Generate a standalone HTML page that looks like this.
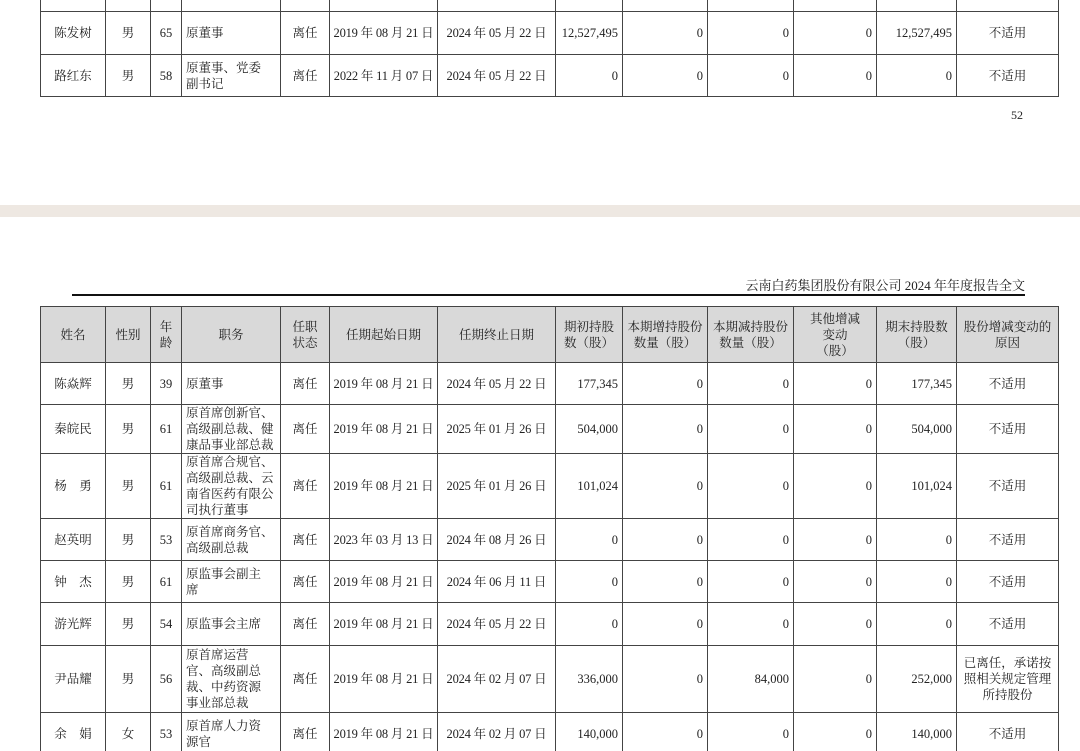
<!DOCTYPE html>
<html><head><meta charset="utf-8"><style>
html,body{margin:0;padding:0;background:#fff;width:1080px;height:751px;overflow:hidden;position:relative}
body{font-family:"Liberation Serif","Noto Serif CJK SC",serif;font-size:12.5px;color:#222}
table{position:absolute;left:40px;border-collapse:collapse;table-layout:fixed;width:1018px}
td{border:1px solid #444;padding:0 4px;line-height:16px;text-align:center;overflow:hidden}
td.l{text-align:left;white-space:nowrap}
td.r{text-align:right}
td.d{white-space:nowrap;padding:0 2px;letter-spacing:-0.2px}
tr.h td{background:#d9d9d9}
.band{position:absolute;left:0;top:205px;width:1080px;height:12px;background:#eee8e2}
.pn{position:absolute;left:1011px;top:108px;font-size:12px}
.title{position:absolute;right:55px;top:275px;font-size:13px}
.hr{position:absolute;left:72px;top:294px;width:953px;height:2px;background:#111}
</style></head><body>
<table style="top:-32px">
<colgroup><col style="width:65px"><col style="width:45px"><col style="width:31px"><col style="width:99px"><col style="width:49px"><col style="width:108px"><col style="width:118px"><col style="width:67px"><col style="width:85px"><col style="width:86px"><col style="width:83px"><col style="width:80px"><col style="width:102px"></colgroup>
<tr style="height:43px"><td></td><td></td><td></td><td></td><td></td><td></td><td></td><td></td><td></td><td></td><td></td><td></td><td></td></tr>
<tr style="height:43px"><td>陈发树</td><td>男</td><td>65</td><td class="l">原董事</td><td>离任</td><td class="d">2019 年 08 月 21 日</td><td class="d">2024 年 05 月 22 日</td><td class="r">12,527,495</td><td class="r">0</td><td class="r">0</td><td class="r">0</td><td class="r">12,527,495</td><td>不适用</td></tr>
<tr style="height:42px"><td>路红东</td><td>男</td><td>58</td><td class="l">原董事、党委<br>副书记</td><td>离任</td><td class="d">2022 年 11 月 07 日</td><td class="d">2024 年 05 月 22 日</td><td class="r">0</td><td class="r">0</td><td class="r">0</td><td class="r">0</td><td class="r">0</td><td>不适用</td></tr>
</table>
<div class="pn">52</div>
<div class="band"></div>
<div class="title">云南白药集团股份有限公司 2024 年年度报告全文</div>
<div class="hr"></div>
<table style="top:306px">
<colgroup><col style="width:65px"><col style="width:45px"><col style="width:31px"><col style="width:99px"><col style="width:49px"><col style="width:108px"><col style="width:118px"><col style="width:67px"><col style="width:85px"><col style="width:86px"><col style="width:83px"><col style="width:80px"><col style="width:102px"></colgroup>
<tr class="h" style="height:56px"><td>姓名</td><td>性别</td><td style="padding:0 2px">年<br>龄</td><td>职务</td><td>任职<br>状态</td><td>任期起始日期</td><td>任期终止日期</td><td>期初持股<br>数（股）</td><td>本期增持股份<br>数量（股）</td><td>本期减持股份<br>数量（股）</td><td>其他增减<br>变动<br>（股）</td><td>期末持股数<br>（股）</td><td>股份增减变动的<br>原因</td></tr>
<tr style="height:42px"><td>陈焱辉</td><td>男</td><td>39</td><td class="l">原董事</td><td>离任</td><td class="d">2019 年 08 月 21 日</td><td class="d">2024 年 05 月 22 日</td><td class="r">177,345</td><td class="r">0</td><td class="r">0</td><td class="r">0</td><td class="r">177,345</td><td>不适用</td></tr>
<tr style="height:48px"><td>秦皖民</td><td>男</td><td>61</td><td class="l">原首席创新官、<br>高级副总裁、健<br>康品事业部总裁</td><td>离任</td><td class="d">2019 年 08 月 21 日</td><td class="d">2025 年 01 月 26 日</td><td class="r">504,000</td><td class="r">0</td><td class="r">0</td><td class="r">0</td><td class="r">504,000</td><td>不适用</td></tr>
<tr style="height:65px"><td>杨　勇</td><td>男</td><td>61</td><td class="l">原首席合规官、<br>高级副总裁、云<br>南省医药有限公<br>司执行董事</td><td>离任</td><td class="d">2019 年 08 月 21 日</td><td class="d">2025 年 01 月 26 日</td><td class="r">101,024</td><td class="r">0</td><td class="r">0</td><td class="r">0</td><td class="r">101,024</td><td>不适用</td></tr>
<tr style="height:42px"><td>赵英明</td><td>男</td><td>53</td><td class="l">原首席商务官、<br>高级副总裁</td><td>离任</td><td class="d">2023 年 03 月 13 日</td><td class="d">2024 年 08 月 26 日</td><td class="r">0</td><td class="r">0</td><td class="r">0</td><td class="r">0</td><td class="r">0</td><td>不适用</td></tr>
<tr style="height:42px"><td>钟　杰</td><td>男</td><td>61</td><td class="l">原监事会副主<br>席</td><td>离任</td><td class="d">2019 年 08 月 21 日</td><td class="d">2024 年 06 月 11 日</td><td class="r">0</td><td class="r">0</td><td class="r">0</td><td class="r">0</td><td class="r">0</td><td>不适用</td></tr>
<tr style="height:43px"><td>游光辉</td><td>男</td><td>54</td><td class="l">原监事会主席</td><td>离任</td><td class="d">2019 年 08 月 21 日</td><td class="d">2024 年 05 月 22 日</td><td class="r">0</td><td class="r">0</td><td class="r">0</td><td class="r">0</td><td class="r">0</td><td>不适用</td></tr>
<tr style="height:67px"><td>尹品耀</td><td>男</td><td>56</td><td class="l">原首席运营<br>官、高级副总<br>裁、中药资源<br>事业部总裁</td><td>离任</td><td class="d">2019 年 08 月 21 日</td><td class="d">2024 年 02 月 07 日</td><td class="r">336,000</td><td class="r">0</td><td class="r">84,000</td><td class="r">0</td><td class="r">252,000</td><td>已离任，承诺按<br>照相关规定管理<br>所持股份</td></tr>
<tr style="height:42px"><td>余　娟</td><td>女</td><td>53</td><td class="l">原首席人力资<br>源官</td><td>离任</td><td class="d">2019 年 08 月 21 日</td><td class="d">2024 年 02 月 07 日</td><td class="r">140,000</td><td class="r">0</td><td class="r">0</td><td class="r">0</td><td class="r">140,000</td><td>不适用</td></tr>
</table>
</body></html>
